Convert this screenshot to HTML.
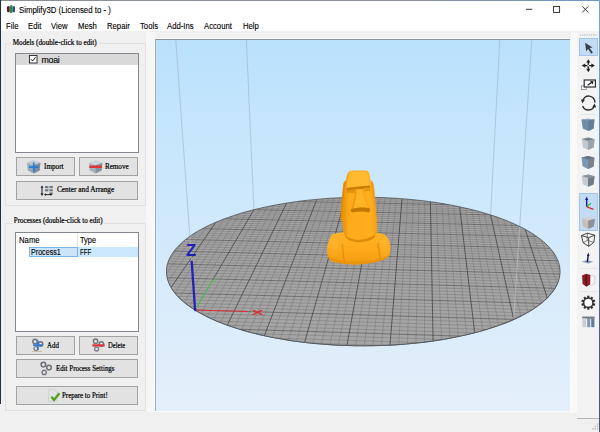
<!DOCTYPE html>
<html><head><meta charset="utf-8"><title>Simplify3D (Licensed to - )</title>
<style>
html,body{margin:0;padding:0;background:#f0f0f0;}
body{width:600px;height:432px;overflow:hidden;}
#win{position:relative;width:600px;height:432px;background:#f0f0f0;overflow:hidden;font-family:"Liberation Sans",sans-serif;color:#000;}
#win *{box-sizing:border-box;}
.abs{position:absolute;}
#titlebar{position:absolute;left:0;top:0;width:600px;height:31px;background:#fff;}
#bt{position:absolute;left:0;top:0;width:600px;height:1px;background:linear-gradient(90deg,#8a8f96,#8a9098 70%,#6f95c8);}
#bl{position:absolute;left:0;top:0;width:1px;height:404px;background:#1d3048;}
#br{position:absolute;left:599px;top:0;width:1px;height:432px;background:linear-gradient(#6aa6e6,#5f8fc8 40%,#4c5f88 75%,#46567c);}
.t{position:absolute;white-space:pre;line-height:1;transform-origin:0 0;}
.sans{font-family:"Liberation Sans",sans-serif;font-size:8.5px;letter-spacing:-0.25px;color:#000;-webkit-text-stroke:0.12px #000;}
.menu{top:21.5px;font-size:8.4px;letter-spacing:0;transform:scaleX(0.92);}
.serif{font-family:"Liberation Serif",serif;font-size:8.3px;color:#000;transform:scaleX(0.85);-webkit-text-stroke:0.22px #000;}
.gb{position:absolute;border:1px solid #e0e0e0;}
.gbt{background:#f0f0f0;padding:0 2px;}
.list{position:absolute;background:#fff;border:1px solid #828790;}
.btn{position:absolute;background:#e2e2e2;border:1px solid #a2a2a2;}
#vp{position:absolute;left:155px;top:39px;width:415px;height:372px;overflow:hidden;}
#vp svg{display:block;}
#vpb{position:absolute;left:154px;top:38px;width:417px;height:374px;border:1px solid #fbfbfb;}
#vpb2{position:absolute;left:155px;top:39px;width:415px;height:372px;border-top:1px solid #8494a0;border-left:1px solid #9db0be;}

</style></head>
<body>
<div id="win">
<div id="titlebar"></div>
<svg class="abs" style="left:7px;top:4.6px" width="8.2" height="8.4" viewBox="0 0 9 10" preserveAspectRatio="none">
<path d="M0,2.2 L1.5,1.2 L3,2.2 L3,7.8 L1.5,8.8 L0,7.8Z" fill="#6a1030"/>
<path d="M3,1 L4.5,0 L6,1 L6,9 L4.5,10 L3,9Z" fill="#2f8a3a"/>
<path d="M6,2.2 L7.5,1.2 L9,2.2 L9,7.8 L7.5,8.8 L6,7.8Z" fill="#2a4a9a"/>
</svg>
<span class="t sans" style="left:19.3px;top:5.6px;font-size:8.4px;letter-spacing:0;transform:scaleX(0.935)">Simplify3D (Licensed to - )</span>
<svg class="abs" style="left:520px;top:0" width="80" height="20" viewBox="520 0 80 20" fill="none" stroke="#222" stroke-width="0.9">
<path d="M526,9.3H532.3"/>
<rect x="553.6" y="6.4" width="6" height="6"/>
<path d="M582.2,6.3L588.4,12.5M588.4,6.3L582.2,12.5"/>
</svg>
<span class="t sans menu" style="left:6px">File</span>
<span class="t sans menu" style="left:28px">Edit</span>
<span class="t sans menu" style="left:51px">View</span>
<span class="t sans menu" style="left:78px">Mesh</span>
<span class="t sans menu" style="left:107px">Repair</span>
<span class="t sans menu" style="left:140px">Tools</span>
<span class="t sans menu" style="left:167px">Add-Ins</span>
<span class="t sans menu" style="left:204px">Account</span>
<span class="t sans menu" style="left:243px">Help</span>

<div class="abs" style="left:146px;top:32px;width:9px;height:380px;background:#f7f7f7"></div>
<!-- Models group -->
<div class="gb" style="left:5px;top:43px;width:141px;height:163px"></div>
<span class="t serif gbt" style="left:10.8px;top:38.5px;transform:scaleX(0.866)">Models (double-click to edit)</span>
<div class="list" style="left:15px;top:53px;width:124px;height:100px"></div>
<div class="abs" style="left:16px;top:54px;width:122px;height:11px;background:#d9d9d9"></div>
<svg class="abs" style="left:29px;top:55px" width="9" height="9" viewBox="0 0 9 9"><rect x="0.5" y="0.5" width="7.5" height="7.5" fill="#fff" stroke="#222" stroke-width="0.9"/><path d="M2,4.3L3.6,6L6.6,2.3" fill="none" stroke="#111" stroke-width="1"/></svg>
<span class="t sans" style="left:41.5px;top:55.5px;font-size:8.8px">moai</span>

<div class="btn" style="left:16px;top:157px;width:59px;height:19px"></div>
<div class="btn" style="left:79px;top:157px;width:59px;height:19px"></div>
<div class="btn" style="left:16px;top:181px;width:122px;height:19px"></div>
<span class="t serif" style="left:43.5px;top:163px;transform:scaleX(0.867)">Import</span>
<span class="t serif" style="left:105px;top:163px;transform:scaleX(0.853)">Remove</span>
<span class="t serif" style="left:56.5px;top:186.2px;transform:scaleX(0.88)">Center and Arrange</span>

<!-- Processes group -->
<div class="gb" style="left:5px;top:223px;width:141px;height:188px"></div>
<span class="t serif gbt" style="left:12px;top:216.6px;transform:scaleX(0.851)">Processes (double-click to edit)</span>
<div class="list" style="left:15px;top:232px;width:124px;height:100px"></div>
<span class="t sans" style="left:18.5px;top:235.6px;font-size:8.6px;letter-spacing:0;transform:scaleX(0.9)">Name</span>
<span class="t sans" style="left:80px;top:235.6px;font-size:8.6px;letter-spacing:0;transform:scaleX(0.86)">Type</span>
<div class="abs" style="left:77px;top:233px;width:1px;height:14px;background:#e5e5e5"></div>
<div class="abs" style="left:29px;top:247px;width:109px;height:10px;background:#cce8ff"></div>
<div class="abs" style="left:29px;top:247px;width:49px;height:10px;border:1px solid #7ab5e6;background:#cce4f7"></div>
<span class="t sans" style="left:30.6px;top:248.2px;font-size:8.3px;letter-spacing:0;transform:scaleX(0.86)">Process1</span>
<span class="t sans" style="left:80px;top:248.2px;font-size:8.3px;letter-spacing:0;transform:scaleX(0.74)">FFF</span>

<div class="btn" style="left:16px;top:336px;width:59px;height:19px"></div>
<div class="btn" style="left:79px;top:336px;width:59px;height:19px"></div>
<div class="btn" style="left:16px;top:359px;width:122px;height:19px"></div>
<div class="btn" style="left:16px;top:386px;width:122px;height:19px"></div>
<span class="t serif" style="left:47px;top:342.4px;transform:scaleX(0.832)">Add</span>
<span class="t serif" style="left:108px;top:342.4px;transform:scaleX(0.8)">Delete</span>
<span class="t serif" style="left:55.5px;top:365.1px;transform:scaleX(0.835)">Edit Process Settings</span>
<span class="t serif" style="left:62px;top:392.1px;transform:scaleX(0.833)">Prepare to Print!</span>
<svg class="abs" style="left:0;top:150px" width="150" height="260" viewBox="0 150 150 260">
<!-- import cube -->
<g>
<path d="M27,163 L33.6,160.6 L40.4,163 L39.6,170.6 L33.6,173.4 L27.8,170.6Z" fill="#9aa8b6"/>
<path d="M27,163 L33.6,160.6 L40.4,163 L33.6,165.2Z" fill="#c3ccd5"/>
<path d="M33.6,165.2 L40.4,163 L39.6,170.6 L33.6,173.4Z" fill="#7d8c9b"/>
<path d="M29,167.2H38.6M33.7,162.6V171.8" stroke="#2a7ad6" stroke-width="1.7" fill="none"/>
</g>
<!-- remove cube -->
<g>
<path d="M89,163 L95.6,160.6 L102.4,163 L101.6,170.6 L95.6,173.4 L89.8,170.6Z" fill="#a9b0b8"/>
<path d="M89,163 L95.6,160.6 L102.4,163 L95.6,165.2Z" fill="#cfd4d9"/>
<path d="M95.6,165.2 L102.4,163 L101.6,170.6 L95.6,173.4Z" fill="#8a939c"/>
<path d="M89.4,166.8H102" stroke="#e0303a" stroke-width="2.4" fill="none"/>
</g>
<!-- center and arrange -->
<g>
<path d="M42,187V194.4" stroke="#222" stroke-width="1" fill="none"/>
<path d="M42,185.4L43.6,187.8H40.4Z M42,196L43.6,193.6H40.4Z" fill="#222"/>
<g fill="#737a83"><rect x="45" y="186" width="3.4" height="2.2"/><rect x="49.4" y="186" width="3.4" height="2.2"/><rect x="45" y="189.2" width="3.4" height="2.2"/><rect x="49.4" y="189.2" width="3.4" height="2.2"/><rect x="49.4" y="192.4" width="3.4" height="2.2"/></g>
<path d="M45,194.6H51" stroke="#222" stroke-width="1" fill="none"/>
<path d="M44,194.6L46,193.2V196Z M52.4,194.6L50.4,193.2V196Z" fill="#222"/>
</g>
<!-- add: gears + plus -->
<g>
<circle cx="35" cy="341.4" r="2.2" fill="none" stroke="#6f747a" stroke-width="1.4"/>
<circle cx="40.6" cy="344" r="2.2" fill="none" stroke="#6f747a" stroke-width="1.4"/>
<circle cx="36" cy="348.6" r="2" fill="none" stroke="#7d8288" stroke-width="1.3"/>
<path d="M33,345.2H42.8M37.8,340.6V350" stroke="#2a7ad6" stroke-width="1.7" fill="none"/>
<path d="M32,351.4H42" stroke="#c8a070" stroke-width="0.6"/>
</g>
<!-- delete: gears + minus -->
<g>
<circle cx="95.6" cy="341.2" r="2.2" fill="none" stroke="#6f747a" stroke-width="1.4"/>
<circle cx="101.4" cy="344" r="2.2" fill="none" stroke="#6f747a" stroke-width="1.4"/>
<circle cx="96.6" cy="349" r="2" fill="none" stroke="#7d8288" stroke-width="1.3"/>
<path d="M92.4,345.4H104.6" stroke="#e0303a" stroke-width="2.2" fill="none"/>
</g>
<!-- edit process: gears -->
<g>
<circle cx="43.4" cy="364.6" r="2.3" fill="none" stroke="#686c72" stroke-width="1.5"/>
<circle cx="49" cy="367.6" r="2.3" fill="none" stroke="#6c7076" stroke-width="1.5"/>
<circle cx="44.2" cy="372.4" r="2.1" fill="none" stroke="#777b81" stroke-width="1.4"/>
</g>
<!-- prepare: doc + check -->
<g>
<path d="M48.6,389.6 L54.4,389.6 L57,392 L57,401.4 L48.6,401.4Z" fill="#e3e3e6" stroke="#c4c4c8" stroke-width="0.6"/>
<path d="M51.4,396.8 L54,400 L59.4,393.2" fill="none" stroke="#4f9e1e" stroke-width="2.2"/>
</g>
</svg>

<div id="vpb"></div>
<div id="bt"></div><div id="bl"></div><div id="br"></div>

<div id="vp">
<svg width="415" height="372" viewBox="155 39 415 372">
<defs>
<linearGradient id="bg" x1="0" y1="0" x2="0" y2="1"><stop offset="0" stop-color="#b9e1fd"/><stop offset="0.27" stop-color="#c7e6fc"/><stop offset="1" stop-color="#e5effa"/></linearGradient>
<clipPath id="dc"><path d="M558.0,260.8 L556.9,258.3 L555.6,255.8 L554.1,253.3 L552.3,250.9 L550.4,248.5 L548.2,246.2 L545.9,243.9 L543.4,241.6 L540.7,239.4 L537.9,237.3 L534.9,235.2 L531.7,233.1 L528.4,231.1 L525.0,229.2 L521.4,227.3 L517.6,225.5 L513.8,223.7 L509.8,222.0 L505.7,220.3 L501.5,218.7 L497.2,217.1 L492.8,215.6 L488.3,214.2 L483.7,212.8 L479.0,211.5 L474.3,210.2 L469.4,209.0 L464.5,207.9 L459.6,206.8 L454.5,205.7 L449.4,204.8 L444.3,203.8 L439.1,203.0 L433.8,202.2 L428.5,201.5 L423.2,200.8 L417.8,200.2 L412.4,199.6 L407.0,199.1 L401.5,198.7 L396.0,198.3 L390.5,198.0 L385.0,197.7 L379.5,197.5 L373.9,197.4 L368.4,197.3 L362.8,197.2 L357.3,197.3 L351.7,197.4 L346.2,197.5 L340.7,197.7 L335.2,198.0 L329.7,198.3 L324.2,198.7 L318.7,199.2 L313.3,199.7 L307.9,200.2 L302.5,200.8 L297.2,201.5 L291.9,202.3 L286.7,203.1 L281.5,203.9 L276.3,204.8 L271.2,205.8 L266.2,206.9 L261.3,208.0 L256.4,209.1 L251.5,210.3 L246.8,211.6 L242.1,212.9 L237.6,214.3 L233.1,215.8 L228.7,217.3 L224.4,218.8 L220.2,220.5 L216.1,222.1 L212.2,223.9 L208.3,225.6 L204.6,227.5 L201.1,229.4 L197.6,231.3 L194.3,233.3 L191.2,235.4 L188.2,237.5 L185.4,239.6 L182.7,241.9 L180.3,244.1 L178.0,246.4 L175.9,248.7 L174.0,251.1 L172.3,253.5 L170.8,256.0 L169.5,258.5 L168.4,261.0 L167.6,263.6 L166.9,266.2 L166.6,268.8 L166.5,271.4 L166.6,274.1 L167.0,276.8 L167.6,279.5 L168.5,282.2 L169.7,284.9 L171.2,287.6 L172.9,290.3 L174.9,293.0 L177.2,295.7 L179.8,298.3 L182.7,301.0 L185.9,303.6 L189.4,306.2 L193.1,308.7 L197.2,311.3 L201.5,313.7 L206.1,316.1 L211.0,318.5 L216.2,320.8 L221.7,323.0 L227.4,325.2 L233.4,327.2 L239.6,329.2 L246.1,331.1 L252.8,332.9 L259.8,334.6 L266.9,336.2 L274.3,337.7 L281.8,339.0 L289.5,340.3 L297.3,341.4 L305.3,342.4 L313.5,343.3 L321.7,344.0 L330.0,344.6 L338.4,345.1 L346.9,345.5 L355.3,345.7 L363.8,345.7 L372.3,345.6 L380.8,345.4 L389.3,345.1 L397.7,344.6 L406.0,344.0 L414.2,343.2 L422.3,342.3 L430.3,341.3 L438.1,340.2 L445.8,338.9 L453.3,337.5 L460.6,336.0 L467.7,334.4 L474.7,332.7 L481.3,330.9 L487.8,329.0 L494.0,327.0 L499.9,324.9 L505.6,322.8 L511.1,320.6 L516.2,318.3 L521.1,315.9 L525.7,313.5 L530.0,311.0 L534.0,308.5 L537.7,305.9 L541.1,303.3 L544.2,300.7 L547.1,298.1 L549.6,295.4 L551.9,292.7 L553.9,290.0 L555.6,287.3 L557.0,284.6 L558.2,281.9 L559.0,279.2 L559.6,276.5 L560.0,273.8 L560.1,271.2 L559.9,268.5 L559.5,265.9 L558.9,263.3Z"/></clipPath>
</defs>
<rect x="155" y="39" width="415" height="372" fill="url(#bg)"/>
<g fill="none" stroke="#9fb0c0" stroke-width="0.6"><path d="M195.1,310.0L157.4,-217.6"/><path d="M513.7,319.4L548.7,-221.7"/><path d="M253.9,209.7L236.7,-177.4"/><path d="M490.6,214.9L511.3,-179.3"/></g>
<path d="M558.0,260.8 L556.9,258.3 L555.6,255.8 L554.1,253.3 L552.3,250.9 L550.4,248.5 L548.2,246.2 L545.9,243.9 L543.4,241.6 L540.7,239.4 L537.9,237.3 L534.9,235.2 L531.7,233.1 L528.4,231.1 L525.0,229.2 L521.4,227.3 L517.6,225.5 L513.8,223.7 L509.8,222.0 L505.7,220.3 L501.5,218.7 L497.2,217.1 L492.8,215.6 L488.3,214.2 L483.7,212.8 L479.0,211.5 L474.3,210.2 L469.4,209.0 L464.5,207.9 L459.6,206.8 L454.5,205.7 L449.4,204.8 L444.3,203.8 L439.1,203.0 L433.8,202.2 L428.5,201.5 L423.2,200.8 L417.8,200.2 L412.4,199.6 L407.0,199.1 L401.5,198.7 L396.0,198.3 L390.5,198.0 L385.0,197.7 L379.5,197.5 L373.9,197.4 L368.4,197.3 L362.8,197.2 L357.3,197.3 L351.7,197.4 L346.2,197.5 L340.7,197.7 L335.2,198.0 L329.7,198.3 L324.2,198.7 L318.7,199.2 L313.3,199.7 L307.9,200.2 L302.5,200.8 L297.2,201.5 L291.9,202.3 L286.7,203.1 L281.5,203.9 L276.3,204.8 L271.2,205.8 L266.2,206.9 L261.3,208.0 L256.4,209.1 L251.5,210.3 L246.8,211.6 L242.1,212.9 L237.6,214.3 L233.1,215.8 L228.7,217.3 L224.4,218.8 L220.2,220.5 L216.1,222.1 L212.2,223.9 L208.3,225.6 L204.6,227.5 L201.1,229.4 L197.6,231.3 L194.3,233.3 L191.2,235.4 L188.2,237.5 L185.4,239.6 L182.7,241.9 L180.3,244.1 L178.0,246.4 L175.9,248.7 L174.0,251.1 L172.3,253.5 L170.8,256.0 L169.5,258.5 L168.4,261.0 L167.6,263.6 L166.9,266.2 L166.6,268.8 L166.5,271.4 L166.6,274.1 L167.0,276.8 L167.6,279.5 L168.5,282.2 L169.7,284.9 L171.2,287.6 L172.9,290.3 L174.9,293.0 L177.2,295.7 L179.8,298.3 L182.7,301.0 L185.9,303.6 L189.4,306.2 L193.1,308.7 L197.2,311.3 L201.5,313.7 L206.1,316.1 L211.0,318.5 L216.2,320.8 L221.7,323.0 L227.4,325.2 L233.4,327.2 L239.6,329.2 L246.1,331.1 L252.8,332.9 L259.8,334.6 L266.9,336.2 L274.3,337.7 L281.8,339.0 L289.5,340.3 L297.3,341.4 L305.3,342.4 L313.5,343.3 L321.7,344.0 L330.0,344.6 L338.4,345.1 L346.9,345.5 L355.3,345.7 L363.8,345.7 L372.3,345.6 L380.8,345.4 L389.3,345.1 L397.7,344.6 L406.0,344.0 L414.2,343.2 L422.3,342.3 L430.3,341.3 L438.1,340.2 L445.8,338.9 L453.3,337.5 L460.6,336.0 L467.7,334.4 L474.7,332.7 L481.3,330.9 L487.8,329.0 L494.0,327.0 L499.9,324.9 L505.6,322.8 L511.1,320.6 L516.2,318.3 L521.1,315.9 L525.7,313.5 L530.0,311.0 L534.0,308.5 L537.7,305.9 L541.1,303.3 L544.2,300.7 L547.1,298.1 L549.6,295.4 L551.9,292.7 L553.9,290.0 L555.6,287.3 L557.0,284.6 L558.2,281.9 L559.0,279.2 L559.6,276.5 L560.0,273.8 L560.1,271.2 L559.9,268.5 L559.5,265.9 L558.9,263.3Z" transform="translate(0,0.6)" fill="#555a60"/>
<path d="M558.0,260.8 L556.9,258.3 L555.6,255.8 L554.1,253.3 L552.3,250.9 L550.4,248.5 L548.2,246.2 L545.9,243.9 L543.4,241.6 L540.7,239.4 L537.9,237.3 L534.9,235.2 L531.7,233.1 L528.4,231.1 L525.0,229.2 L521.4,227.3 L517.6,225.5 L513.8,223.7 L509.8,222.0 L505.7,220.3 L501.5,218.7 L497.2,217.1 L492.8,215.6 L488.3,214.2 L483.7,212.8 L479.0,211.5 L474.3,210.2 L469.4,209.0 L464.5,207.9 L459.6,206.8 L454.5,205.7 L449.4,204.8 L444.3,203.8 L439.1,203.0 L433.8,202.2 L428.5,201.5 L423.2,200.8 L417.8,200.2 L412.4,199.6 L407.0,199.1 L401.5,198.7 L396.0,198.3 L390.5,198.0 L385.0,197.7 L379.5,197.5 L373.9,197.4 L368.4,197.3 L362.8,197.2 L357.3,197.3 L351.7,197.4 L346.2,197.5 L340.7,197.7 L335.2,198.0 L329.7,198.3 L324.2,198.7 L318.7,199.2 L313.3,199.7 L307.9,200.2 L302.5,200.8 L297.2,201.5 L291.9,202.3 L286.7,203.1 L281.5,203.9 L276.3,204.8 L271.2,205.8 L266.2,206.9 L261.3,208.0 L256.4,209.1 L251.5,210.3 L246.8,211.6 L242.1,212.9 L237.6,214.3 L233.1,215.8 L228.7,217.3 L224.4,218.8 L220.2,220.5 L216.1,222.1 L212.2,223.9 L208.3,225.6 L204.6,227.5 L201.1,229.4 L197.6,231.3 L194.3,233.3 L191.2,235.4 L188.2,237.5 L185.4,239.6 L182.7,241.9 L180.3,244.1 L178.0,246.4 L175.9,248.7 L174.0,251.1 L172.3,253.5 L170.8,256.0 L169.5,258.5 L168.4,261.0 L167.6,263.6 L166.9,266.2 L166.6,268.8 L166.5,271.4 L166.6,274.1 L167.0,276.8 L167.6,279.5 L168.5,282.2 L169.7,284.9 L171.2,287.6 L172.9,290.3 L174.9,293.0 L177.2,295.7 L179.8,298.3 L182.7,301.0 L185.9,303.6 L189.4,306.2 L193.1,308.7 L197.2,311.3 L201.5,313.7 L206.1,316.1 L211.0,318.5 L216.2,320.8 L221.7,323.0 L227.4,325.2 L233.4,327.2 L239.6,329.2 L246.1,331.1 L252.8,332.9 L259.8,334.6 L266.9,336.2 L274.3,337.7 L281.8,339.0 L289.5,340.3 L297.3,341.4 L305.3,342.4 L313.5,343.3 L321.7,344.0 L330.0,344.6 L338.4,345.1 L346.9,345.5 L355.3,345.7 L363.8,345.7 L372.3,345.6 L380.8,345.4 L389.3,345.1 L397.7,344.6 L406.0,344.0 L414.2,343.2 L422.3,342.3 L430.3,341.3 L438.1,340.2 L445.8,338.9 L453.3,337.5 L460.6,336.0 L467.7,334.4 L474.7,332.7 L481.3,330.9 L487.8,329.0 L494.0,327.0 L499.9,324.9 L505.6,322.8 L511.1,320.6 L516.2,318.3 L521.1,315.9 L525.7,313.5 L530.0,311.0 L534.0,308.5 L537.7,305.9 L541.1,303.3 L544.2,300.7 L547.1,298.1 L549.6,295.4 L551.9,292.7 L553.9,290.0 L555.6,287.3 L557.0,284.6 L558.2,281.9 L559.0,279.2 L559.6,276.5 L560.0,273.8 L560.1,271.2 L559.9,268.5 L559.5,265.9 L558.9,263.3Z" fill="#a5a5a5"/>
<g clip-path="url(#dc)">
<path d="M168.3,261.2L182.9,241.7M312.9,343.2L381.4,345.4M166.5,273.2L196.5,232.0M276.7,338.1L419.6,342.6M168.1,281.1L206.8,226.4M255.6,333.6L442.7,339.4M174.9,292.9L224.3,218.9M227.6,325.2L474.5,332.8M179.3,297.8L232.2,216.1M217.3,321.2L486.5,329.4M184.2,302.2L239.7,213.7M208.7,317.4L496.8,326.1M189.5,306.3L246.9,211.6M201.4,313.6L505.8,322.7M201.1,313.5L260.8,208.1M189.7,306.4L520.6,316.1M207.3,316.7L267.4,206.6M185.1,303.0L526.7,312.9M213.7,319.7L273.9,205.3M181.2,299.6L532.1,309.7M220.4,322.5L280.3,204.1M177.8,296.3L536.9,306.5M234.4,327.6L292.8,202.1M172.6,289.8L544.7,300.3M241.7,329.8L298.9,201.3M170.7,286.7L547.9,297.2M249.1,331.9L304.9,200.6M169.1,283.7L550.7,294.2M256.7,333.9L310.9,199.9M168.0,280.7L553.1,291.2M272.2,337.3L322.7,198.8M166.7,274.8L556.7,285.4M280.2,338.8L328.5,198.4M166.5,272.0L557.9,282.5M288.2,340.1L334.3,198.0M166.5,269.2L558.9,279.6M296.4,341.3L340.0,197.8M166.9,266.5L559.6,276.8M312.9,343.2L351.4,197.4M168.3,261.2L560.1,271.4M321.3,344.0L357.0,197.3M169.4,258.6L559.9,268.7M329.8,344.6L362.7,197.2M170.7,256.1L559.5,266.0M338.3,345.1L368.3,197.3M172.2,253.6L558.9,263.4M355.5,345.7L379.6,197.5M175.9,248.7L556.9,258.2M364.1,345.7L385.2,197.7M178.0,246.3L555.6,255.7M372.7,345.6L390.8,198.0M180.4,244.0L554.0,253.2M381.4,345.4L396.4,198.3M182.9,241.7L552.2,250.7M398.7,344.5L407.7,199.2M188.6,237.2L548.0,245.9M407.3,343.9L413.3,199.7M191.7,235.0L545.5,243.5M415.9,343.0L419.0,200.3M195.0,232.9L542.9,241.2M424.5,342.1L424.7,201.0M198.6,230.8L540.0,238.8M441.5,339.6L436.2,202.5M206.3,226.7L533.5,234.3M450.0,338.2L441.9,203.5M210.4,224.7L529.9,232.0M458.3,336.5L447.8,204.5M214.9,222.7L526.1,229.8M466.6,334.7L453.7,205.6M219.5,220.7L522.0,227.6M482.8,330.5L465.6,208.1M229.7,216.9L512.9,223.3M490.7,328.1L471.7,209.6M235.2,215.1L507.9,221.2M498.5,325.4L477.9,211.2M241.0,213.3L502.5,219.1M506.2,322.6L484.2,212.9M247.3,211.5L496.8,217.0M520.9,316.0L497.1,217.1M261.1,208.0L483.8,212.8M528.0,312.2L503.8,219.5M268.9,206.3L476.5,210.8M534.7,308.0L510.6,222.3M277.4,204.7L468.4,208.8M541.2,303.3L517.7,225.5M286.8,203.0L459.4,206.7M552.8,291.6L533.0,234.0M310.1,200.0L436.9,202.7M557.4,283.7L541.7,240.2M326.0,198.6L421.4,200.6M560.1,271.4L552.2,250.7M351.4,197.4L396.4,198.3" fill="none" stroke="#767676" stroke-width="0.5"/>
<path d="M240.0,329.3L460.2,336.1M195.1,310.0L513.7,319.4M175.0,293.0L541.1,303.4M167.2,277.7L555.0,288.3M167.5,263.8L560.0,274.1M174.0,251.1L558.0,260.8M185.6,239.5L550.2,248.3M202.3,228.7L536.9,236.5M224.5,218.8L517.6,225.4M253.9,209.7L490.6,214.9M297.5,201.5L449.1,204.7" fill="none" stroke="#4c4c4c" stroke-width="0.6"/>
<path d="M171.1,287.4L215.9,222.2M195.1,310.0L253.9,209.7M227.3,325.1L286.6,203.1M264.4,335.6L316.8,199.3M304.6,342.3L345.7,197.5M346.9,345.5L373.9,197.4M390.0,345.0L402.0,198.7M433.1,340.9L430.4,201.7M474.7,332.7L459.6,206.8M513.7,319.4L490.6,214.9M547.2,297.9L525.2,229.3" fill="none" stroke="#3e3e3e" stroke-width="0.75"/>
<g fill="none" stroke="#d0d4d8" stroke-width="0.6" opacity="0.8"><path d="M195.1,310.0L157.4,-217.6"/><path d="M513.7,319.4L548.7,-221.7"/><path d="M253.9,209.7L236.7,-177.4"/><path d="M490.6,214.9L511.3,-179.3"/></g>
</g>
<path d="M558.0,260.8 L556.9,258.3 L555.6,255.8 L554.1,253.3 L552.3,250.9 L550.4,248.5 L548.2,246.2 L545.9,243.9 L543.4,241.6 L540.7,239.4 L537.9,237.3 L534.9,235.2 L531.7,233.1 L528.4,231.1 L525.0,229.2 L521.4,227.3 L517.6,225.5 L513.8,223.7 L509.8,222.0 L505.7,220.3 L501.5,218.7 L497.2,217.1 L492.8,215.6 L488.3,214.2 L483.7,212.8 L479.0,211.5 L474.3,210.2 L469.4,209.0 L464.5,207.9 L459.6,206.8 L454.5,205.7 L449.4,204.8 L444.3,203.8 L439.1,203.0 L433.8,202.2 L428.5,201.5 L423.2,200.8 L417.8,200.2 L412.4,199.6 L407.0,199.1 L401.5,198.7 L396.0,198.3 L390.5,198.0 L385.0,197.7 L379.5,197.5 L373.9,197.4 L368.4,197.3 L362.8,197.2 L357.3,197.3 L351.7,197.4 L346.2,197.5 L340.7,197.7 L335.2,198.0 L329.7,198.3 L324.2,198.7 L318.7,199.2 L313.3,199.7 L307.9,200.2 L302.5,200.8 L297.2,201.5 L291.9,202.3 L286.7,203.1 L281.5,203.9 L276.3,204.8 L271.2,205.8 L266.2,206.9 L261.3,208.0 L256.4,209.1 L251.5,210.3 L246.8,211.6 L242.1,212.9 L237.6,214.3 L233.1,215.8 L228.7,217.3 L224.4,218.8 L220.2,220.5 L216.1,222.1 L212.2,223.9 L208.3,225.6 L204.6,227.5 L201.1,229.4 L197.6,231.3 L194.3,233.3 L191.2,235.4 L188.2,237.5 L185.4,239.6 L182.7,241.9 L180.3,244.1 L178.0,246.4 L175.9,248.7 L174.0,251.1 L172.3,253.5 L170.8,256.0 L169.5,258.5 L168.4,261.0 L167.6,263.6 L166.9,266.2 L166.6,268.8 L166.5,271.4 L166.6,274.1 L167.0,276.8 L167.6,279.5 L168.5,282.2 L169.7,284.9 L171.2,287.6 L172.9,290.3 L174.9,293.0 L177.2,295.7 L179.8,298.3 L182.7,301.0 L185.9,303.6 L189.4,306.2 L193.1,308.7 L197.2,311.3 L201.5,313.7 L206.1,316.1 L211.0,318.5 L216.2,320.8 L221.7,323.0 L227.4,325.2 L233.4,327.2 L239.6,329.2 L246.1,331.1 L252.8,332.9 L259.8,334.6 L266.9,336.2 L274.3,337.7 L281.8,339.0 L289.5,340.3 L297.3,341.4 L305.3,342.4 L313.5,343.3 L321.7,344.0 L330.0,344.6 L338.4,345.1 L346.9,345.5 L355.3,345.7 L363.8,345.7 L372.3,345.6 L380.8,345.4 L389.3,345.1 L397.7,344.6 L406.0,344.0 L414.2,343.2 L422.3,342.3 L430.3,341.3 L438.1,340.2 L445.8,338.9 L453.3,337.5 L460.6,336.0 L467.7,334.4 L474.7,332.7 L481.3,330.9 L487.8,329.0 L494.0,327.0 L499.9,324.9 L505.6,322.8 L511.1,320.6 L516.2,318.3 L521.1,315.9 L525.7,313.5 L530.0,311.0 L534.0,308.5 L537.7,305.9 L541.1,303.3 L544.2,300.7 L547.1,298.1 L549.6,295.4 L551.9,292.7 L553.9,290.0 L555.6,287.3 L557.0,284.6 L558.2,281.9 L559.0,279.2 L559.6,276.5 L560.0,273.8 L560.1,271.2 L559.9,268.5 L559.5,265.9 L558.9,263.3Z" fill="none" stroke="#4d5358" stroke-width="0.8"/>
<defs>
<linearGradient id="mh" x1="0" y1="0" x2="1" y2="0"><stop offset="0" stop-color="#e8920c"/><stop offset="0.2" stop-color="#ffaa1a"/><stop offset="0.8" stop-color="#ffae1e"/><stop offset="1" stop-color="#f6a014"/></linearGradient>
<linearGradient id="mb" x1="0" y1="0" x2="0" y2="1"><stop offset="0" stop-color="#ffb42a"/><stop offset="0.55" stop-color="#ffa91b"/><stop offset="1" stop-color="#f29a10"/></linearGradient>
<radialGradient id="ms" cx="0.5" cy="0.35" r="0.7"><stop offset="0" stop-color="#ffb830"/><stop offset="1" stop-color="#f8a216"/></radialGradient>
</defs>
<g id="moai">
<path d="M335.3,233.5 C330.7,234.5 331.9,235.2 330.6,237.2 C329.3,239.2 328.2,242.8 327.7,245.3 C327.1,247.8 327.2,250.1 327.3,252.2 C327.4,254.3 327.6,256.3 328.4,257.8 C329.1,259.3 330.4,260.4 331.8,261.2 C333.2,262.0 334.0,262.3 336.7,262.8 C339.4,263.3 344.1,263.8 347.8,264.1 C351.5,264.4 355.0,264.6 358.9,264.4 C362.8,264.2 367.7,263.7 371.4,263.1 C375.1,262.5 378.5,261.5 381.1,260.6 C383.8,259.7 385.9,259.0 387.3,257.8 C388.8,256.6 389.3,255.5 389.8,253.4 C390.3,251.3 390.5,247.9 390.1,245.3 C389.7,242.7 388.9,240.0 387.4,238.0 C385.9,236.0 386.0,234.7 381.1,233.5 C376.2,232.3 365.6,231.0 358.0,231.0 C350.4,231.0 339.9,232.5 335.3,233.5Z" fill="url(#mb)"/>
<ellipse cx="334.6" cy="247" rx="7" ry="11" fill="url(#ms)" opacity="0.7"/>
<ellipse cx="384" cy="246.4" rx="6.4" ry="10.6" fill="url(#ms)" opacity="0.7"/>
<path d="M342.4,244 C342.6,250 343.4,256.6 344.6,262" fill="none" stroke="#e08c0a" stroke-width="1.4" opacity="0.8"/>
<path d="M377.6,243 C378.6,248 379.6,254 380.2,259.6" fill="none" stroke="#e08c0a" stroke-width="1.4" opacity="0.8"/>
<path d="M328,254 C328.6,258 330.6,260.8 336.7,262.8 C344,264.4 352,264.6 358.9,264.4 C367,264 375,262.6 381.1,260.6 C386,258.8 389.2,257 389.8,253.4 C387,257.6 380,259.8 370,260.8 C358,262 344,261.8 336,259.6 C331.6,258.4 329.4,256.6 328,254Z" fill="#e8920c" opacity="0.85"/>
<!-- ears -->
<path d="M346.4,180 C344.4,181 343.3,182.5 343.2,185 L341.6,200 L340.7,214 L340.3,219.4 L343.5,221.4 L347,200Z" fill="#df8a08"/>
<path d="M370.5,180 C372.5,181 373.6,183 373.8,185 L375.4,200 L376.5,214 L377.3,222 L373,222 L371,200Z" fill="#f29e12"/>
<!-- head -->
<path d="M350.2,171.1 C352.0,170.6 355.7,170.6 358.5,170.6 C361.3,170.6 365.3,170.3 367.2,171.0 C369.1,171.7 369.0,173.0 369.6,175.0 C370.2,177.0 370.4,180.0 370.8,183.0 C371.2,186.0 371.5,189.5 372.0,193.0 C372.5,196.5 373.1,200.5 373.6,204.0 C374.1,207.5 374.7,210.7 375.2,214.0 C375.7,217.3 376.5,221.3 376.8,224.0 C377.1,226.7 377.2,228.2 377.0,230.0 C376.8,231.8 376.9,233.2 375.4,234.6 C373.9,236.0 370.9,237.7 368.0,238.6 C365.1,239.5 361.2,240.0 358.0,240.0 C354.8,240.0 351.2,239.3 349.0,238.4 C346.8,237.5 345.6,236.3 344.6,234.6 C343.6,232.9 343.5,230.6 343.1,228.0 C342.7,225.4 342.4,222.3 342.4,219.0 C342.3,215.7 342.6,211.7 342.8,208.0 C343.0,204.3 343.4,200.5 343.8,197.0 C344.2,193.5 344.6,190.1 345.0,187.0 C345.4,183.9 345.8,180.7 346.2,178.5 C346.6,176.3 346.9,174.8 347.6,173.6 C348.3,172.4 348.4,171.6 350.2,171.1Z" fill="url(#mh)"/>
<!-- forehead highlight -->
<path d="M350.2,172.1 C355,171.4 362,171.2 366.8,171.9 C368.2,175 369,180 369.8,185.8 C363,186.2 354,187.0 346.6,188.0 C347,182 348.2,176 350.2,172.1Z" fill="#ffba30"/>
<!-- brow shadow -->
<path d="M346.4,188.0 C354,186.8 363,186.0 369.9,185.5 L370.2,187.8 C366.4,187.8 364.6,188.0 363,189.0 L355.5,189.8 C352.5,189.6 350,190.2 346.8,191.2Z" fill="#c97b06"/>
<!-- eye sockets -->
<path d="M346.9,190.6 C350,189.6 353,189.4 355.4,189.7 L354.2,193.2 C352,192.2 349.6,192.2 347.2,193.0Z" fill="#e18e0b"/>
<path d="M363,189.0 C365.4,188.1 367.8,187.9 370.2,187.9 L370.6,191.2 C368,190.6 365.4,190.9 363.8,192.0Z" fill="#ea960e"/>
<!-- nose -->
<path d="M355.4,189.7 L363,189.0 C364.6,196 367.4,203 370,208.8 C365,210.8 356,211.4 351.2,210.2 C352.8,204 354.6,197 355.4,189.7Z" fill="#ffb326"/>
<path d="M355.4,189.7 C354.6,197 352.8,204 351.2,210.2 L353.2,210.6 C354.8,204 356.2,197 356.9,189.6Z" fill="#ee9a10"/>
<path d="M363,189.0 C364.6,196 367.4,203 370,208.8 L368.4,209.2 C366,203.4 363.4,196.4 361.9,189.1Z" fill="#f6a418" opacity="0.8"/>
<path d="M351,209.2 C356,207.4 365,207 370,208.4 C370.4,210.2 370,211.8 368.6,212.4 C363,211 357,211.2 352.2,212.6 C351,211.8 350.7,210.4 351,209.2Z" fill="#c47705"/>
<!-- cheek / jaw shading -->
<path d="M344.6,234.6 C347.5,237.8 352,239.8 358,240 C365,239.8 372,237.2 375.4,234.6 C375.4,236 375,237.2 374.2,238 C370,241 364,242.2 358,242.2 C352.4,242 348,240.2 345.6,237.6Z" fill="#de8a09"/>
<path d="M343.6,199 C343,207 342.4,215 342.5,222 C342.7,227 343.3,231 344.6,234.6 L346.6,236 C345.4,231 345,226 345,221 C345,214 345.4,207 346,199Z" fill="#ea960f" opacity="0.85"/>
</g>
<g fill="none" stroke-linecap="round">
<path d="M195.1,310.0L212.6,280.1" stroke="#4fd058" stroke-width="1.1" opacity="0.85"/>
<path d="M195.1,310.0L247.4,311.5" stroke="#dc2c36" stroke-width="1.1"/>
<path d="M195.1,310.0L191.7,261.7" stroke="#2222b8" stroke-width="2.3"/>
</g>
<text x="257.6" y="315.2" font-family="Liberation Sans, sans-serif" font-size="9" font-weight="bold" fill="#dc2c36" text-anchor="middle" transform="translate(257.6 312) scale(2.1 0.8) translate(-257.6 -312)">X</text>
<text x="214.6" y="281.6" font-family="Liberation Sans, sans-serif" font-size="5" fill="#2fd23a" text-anchor="middle">Y</text>
<text x="191" y="256.2" font-family="Liberation Sans, sans-serif" font-size="16.5" font-weight="bold" fill="#2020b4" text-anchor="middle">Z</text>
</svg>
</div>
<div id="vpb2"></div>
<div class="abs" style="left:571px;top:32px;width:6px;height:381px;background:#f9f9f9"></div>
<div class="abs" style="left:577px;top:32px;width:22px;height:387px;background:#f3f3f3;border-bottom:1px solid #b5b5b5"></div>
<svg class="abs" style="left:592px;top:423px" width="7" height="7" viewBox="0 0 7 7"><g fill="#b8b8b8"><rect x="5" y="0.5" width="1.4" height="1.4"/><rect x="2.6" y="2.8" width="1.4" height="1.4"/><rect x="5" y="2.8" width="1.4" height="1.4"/><rect x="0.2" y="5.1" width="1.4" height="1.4"/><rect x="2.6" y="5.1" width="1.4" height="1.4"/><rect x="5" y="5.1" width="1.4" height="1.4"/></g></svg>
<div class="abs" style="left:579px;top:38px;width:19px;height:18px;background:#c3dbf3;border:1px solid #a3c6e8"></div>
<div class="abs" style="left:579px;top:192.5px;width:19px;height:38px;background:#c3dbf3;border:1px solid #a3c6e8"></div>
<svg class="abs" style="left:576px;top:30px" width="24" height="310" viewBox="576 30 24 310">
<defs>
<linearGradient id="cb1" x1="0" y1="0" x2="1" y2="1"><stop offset="0" stop-color="#87a1ba"/><stop offset="1" stop-color="#5f7b96"/></linearGradient>
<linearGradient id="cg1" x1="0" y1="0" x2="1" y2="0"><stop offset="0" stop-color="#c9ced3"/><stop offset="1" stop-color="#8d969f"/></linearGradient>
</defs>
<!-- grip -->
<path d="M580,35H597" stroke="#8fa6bd" stroke-width="1" stroke-dasharray="1 1.2" fill="none"/>
<!-- arrow cursor -->
<path d="M585.1,42.7 L592.6,47.4 L589.6,48 L592.9,52.6 L591.3,53.7 L588.2,49 L586.2,51.2Z" fill="#36404c"/>
<!-- move -->
<g fill="#222">
<path d="M588.3,59.3 L590.4,62.6 L589,62.6 L589,64.9 L591.3,64.9 L591.3,63.5 L594.9,65.6 L591.3,67.7 L591.3,66.3 L589,66.3 L589,68.8 L590.4,68.8 L588.3,72.2 L586.2,68.8 L587.6,68.8 L587.6,66.3 L585.3,66.3 L585.3,67.7 L581.6,65.6 L585.3,63.5 L585.3,64.9 L587.6,64.9 L587.6,62.6 L586.2,62.6Z"/>
</g>
<rect x="587.5" y="64.8" width="1.6" height="1.6" fill="#fff"/>
<!-- scale -->
<rect x="581.4" y="85.9" width="4.8" height="3.6" fill="#fff" stroke="#7b838c" stroke-width="0.8"/>
<rect x="584.2" y="80" width="11.2" height="7" fill="#fff" stroke="#2b2f34" stroke-width="1.2"/>
<path d="M587.6,85.2 L592,82.2" stroke="#222" stroke-width="1.3" fill="none"/>
<path d="M589.9,81.2 L593.6,81.1 L592.6,84.6Z" fill="#222"/>
<!-- rotate -->
<g fill="none" stroke="#2b2f34" stroke-width="1.4">
<path d="M582.6,101.2 A6.2,6.2 0 0 1 594.9,102.6"/>
<path d="M594.4,105.4 A6.2,6.2 0 0 1 582.6,106"/>
</g>
<path d="M581,99.4 L585,99.6 L582.4,103.4Z" fill="#2b2f34"/>
<path d="M596.2,107.4 L592.2,107.2 L594.6,103.6Z" fill="#2b2f34"/>
<!-- separators -->
<g stroke="#e4e7ea" stroke-width="1"><path d="M580,114.5H597"/><path d="M580,268.5H597"/><path d="M580,291.5H597"/></g>
<!-- cube 1 (blue) -->
<path d="M581.4,119.4 L588,118.7 L594.4,119.4 L593.6,128.4 L588.4,131 L582.8,128.4Z" fill="#6f8ca8"/>
<path d="M581.4,119.4 L588,118.7 L594.4,119.4 L588.2,120.6Z" fill="#8ea7bf"/>
<path d="M588.2,120.6 L594.4,119.4 L593.6,128.4 L588.4,131Z" fill="#627e9a"/>
<!-- cube 2 (gray, top dark) -->
<path d="M581.8,139 L588.4,137.5 L594.6,139.2 L593.6,147.6 L588,149.9 L582.8,147.4Z" fill="#c2c8ce"/>
<path d="M581.8,139 L588.4,137.5 L594.6,139.2 L588,141Z" fill="#76838f"/>
<path d="M588,141 L594.6,139.2 L593.6,147.6 L588,149.9Z" fill="#9aa3ac"/>
<!-- cube 3 -->
<path d="M581.5,157.6 L588.2,156 L594.4,157.8 L593.6,166.4 L588,168.9 L582.6,166.2Z" fill="#7b98b3"/>
<path d="M581.5,157.6 L588.2,156 L594.4,157.8 L588,159.6Z" fill="#66727e"/>
<path d="M588,159.6 L594.4,157.8 L593.6,166.4 L588,168.9Z" fill="#78838e"/>
<!-- cube 4 -->
<path d="M581.8,176 L588.4,174.4 L594.6,176.2 L593.6,184.4 L588,186.8 L582.8,184.2Z" fill="#c6cbd0"/>
<path d="M581.8,176 L588.4,174.4 L594.6,176.2 L588,178Z" fill="#8a949d"/>
<path d="M588,178 L594.6,176.2 L593.6,184.4 L588,186.8Z" fill="#727c87"/>
<!-- axes -->
<path d="M586.7,206.8 L586.7,199.5" stroke="#14208c" stroke-width="1.4" fill="none"/>
<path d="M586.7,196.4 L588.3,200 L585.1,200Z" fill="#14208c"/>
<path d="M586.7,206.8 L590.9,203.2" stroke="#2fba3c" stroke-width="1.2" fill="none"/>
<path d="M586.7,206.8 L593.4,209.4" stroke="#d0202a" stroke-width="1.2" fill="none"/>
<!-- cube 5 -->
<path d="M581.8,218.8 L588.6,217 L594.9,218.8 L593.8,226.6 L588.2,228.9 L582.8,226.4Z" fill="#c8c0c0"/>
<path d="M581.8,218.8 L588.6,217 L594.9,218.8 L588.2,220.6Z" fill="#d6d2d2"/>
<path d="M588.2,220.6 L594.9,218.8 L593.8,226.6 L588.2,228.9Z" fill="#8d9299"/>
<!-- wire cube -->
<g fill="none" stroke="#333" stroke-width="0.9">
<path d="M581.4,235.6 L587.4,233.2 L594.8,235.2 L593.8,242.4 L588.8,246.3 L583.2,242.8Z"/>
<path d="M581.4,235.6 L588.6,237.6 L594.8,235.2 M588.6,237.6 L588.8,246.3"/>
<path d="M587.4,233.2 L587.2,240.4 L583.2,242.8 M587.2,240.4 L593.8,242.4" stroke-width="0.6"/>
</g>
<!-- z arrow with plane -->
<path d="M581.8,261.6 L587,260.2 L593.6,261.8 L588,263.6Z" fill="#8c9bb5"/>
<path d="M587.4,262 L588.2,255" stroke="#1a1f5c" stroke-width="1.5" fill="none"/>
<path d="M588.5,252.4 L589.6,256 L586.9,255.8Z" fill="#1a1f5c"/>
<!-- section -->
<path d="M582,275.4 L586,273.8 L590.6,275 L590.4,284.2 L586.4,286.8 L582.6,284Z" fill="#8c1f2b"/>
<path d="M586,275.6 L586.2,286" stroke="#5e0f18" stroke-width="1.4"/>
<path d="M590.6,275 L595.2,276.4 L594.6,283.8 L590.4,286" fill="#f2f2f2" stroke="#a9b0b8" stroke-width="0.7" stroke-dasharray="1 0.8"/>
<!-- gear -->
<g transform="translate(588.3 302.7)">
<g fill="#2f3133">
<rect x="-1.1" y="-7" width="2.2" height="14"/>
<rect x="-1.1" y="-7" width="2.2" height="14" transform="rotate(36)"/>
<rect x="-1.1" y="-7" width="2.2" height="14" transform="rotate(72)"/>
<rect x="-1.1" y="-7" width="2.2" height="14" transform="rotate(108)"/>
<rect x="-1.1" y="-7" width="2.2" height="14" transform="rotate(144)"/>
</g>
<circle r="5.4" fill="#2f3133"/><circle r="3.9" fill="#fbfbfb"/>
</g>
<!-- supports -->
<rect x="582.2" y="316.6" width="12.4" height="2.2" fill="#6e757d"/>
<rect x="582.4" y="318" width="3.8" height="9.2" fill="#c9cdd2"/>
<rect x="587.2" y="319" width="3" height="8.2" fill="#8297ad"/>
<rect x="591.2" y="319" width="3.2" height="8.2" fill="#5f7e9e"/>
</svg>

</div>
</body></html>
